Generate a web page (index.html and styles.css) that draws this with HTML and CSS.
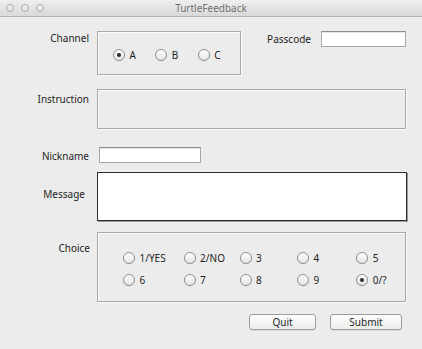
FILE: index.html
```html
<!DOCTYPE html>
<html>
<head>
<meta charset="utf-8">
<title>TurtleFeedback</title>
<link rel="stylesheet" href="styles.css">
</head>
<body>
<div class="window">
  <div class="titlebar">
    <div class="lights"><span class="light"></span><span class="light"></span><span class="light"></span></div>
    <div class="title">TurtleFeedback</div>
    <div></div>
  </div>
  <main class="content">
    <div class="row row-channel">
      <div class="label label-channel">Channel</div>
      <div class="group channel">
        <label class="opt"><span class="rb on"></span>A</label>
        <label class="opt"><span class="rb"></span>B</label>
        <label class="opt"><span class="rb"></span>C</label>
      </div>
      <div class="passcode">
        <span class="plabel">Passcode</span>
        <span class="field pass"></span>
      </div>
    </div>
    <div class="row row-instruction">
      <div class="label label-instruction">Instruction</div>
      <div class="group instruction"></div>
    </div>
    <div class="row row-nick">
      <div class="label label-nick">Nickname</div>
      <span class="field nick"></span>
    </div>
    <div class="row row-message">
      <div class="label label-message">Message</div>
      <div class="message"></div>
    </div>
    <div class="row row-choice">
      <div class="label label-choice">Choice</div>
      <div class="group choice">
        <label class="opt"><span class="rb"></span>1/YES</label>
        <label class="opt"><span class="rb"></span>2/NO</label>
        <label class="opt"><span class="rb"></span>3</label>
        <label class="opt"><span class="rb"></span>4</label>
        <label class="opt"><span class="rb"></span>5</label>
        <label class="opt"><span class="rb"></span>6</label>
        <label class="opt"><span class="rb"></span>7</label>
        <label class="opt"><span class="rb"></span>8</label>
        <label class="opt"><span class="rb"></span>9</label>
        <label class="opt"><span class="rb on"></span>0/?</label>
      </div>
    </div>
    <div class="row buttons">
      <button class="btn quit">Quit</button>
      <button class="btn submit">Submit</button>
    </div>
  </main>
</div>
</body>
</html>
```

FILE: styles.css
```css
* { box-sizing: border-box; }
html, body { margin: 0; padding: 0; }
body {
  width: 422px;
  height: 349px;
  overflow: hidden;
  background: #ececec;
  font-family: "Noto Sans", "DejaVu Sans", sans-serif;
  font-size: 10px;
  color: #1e1e1e;
}
.titlebar {
  height: 17px;
  display: grid;
  grid-template-columns: 1fr auto 1fr;
  align-items: center;
  background: linear-gradient(#efefef, #d9d9d9);
  border-bottom: 1px solid #b1b1b1;
}
.lights { display: flex; gap: 7px; padding-left: 6px; }
.light {
  width: 8px; height: 8px; border-radius: 50%;
  border: 1px solid #a8a8a8;
  background: linear-gradient(#f2f2f2, #e0e0e0);
}
.title { color: #707070; font-size: 10px; line-height: 12px; }

.content { padding-top: 14px; }
.row { display: flex; align-items: flex-start; }
.label {
  width: 89px; flex: none; margin-right: 8px;
  text-align: right; line-height: 12px;
}
.label-channel { padding-top: 1px; }
.label-instruction { padding-top: 4px; }
.label-nick { padding-top: 3px; }
.label-message { padding-top: 16px; padding-right: 4px; }
.label-choice { padding-top: 10px; width: 90px; margin-right: 7px; }

.group {
  border: 1px solid #a9a9a9;
  box-shadow: 1px 1px 0 #fbfbfb, inset 1px 1px 0 #fbfbfb;
}
.channel {
  width: 144px; height: 44px;
  display: flex;
  padding: 17px 0 0 15px;
}
.channel .opt { width: 44.5px; }
.opt { display: flex; align-items: center; gap: 4.5px; line-height: 12px; height: 12px; }
.rb {
  width: 12px; height: 12px; border-radius: 50%; flex: none;
  border: 1px solid #8f8f8f;
  background: linear-gradient(#ffffff, #e4e4e4);
  box-shadow: 0 0.5px 0.5px rgba(0,0,0,0.12);
  display: flex; align-items: center; justify-content: center;
}
.rb.on::after {
  content: ""; width: 4px; height: 4px; border-radius: 50%; background: #2a2a2a;
}

.passcode {
  margin-left: auto; margin-right: 16px;
  display: flex; align-items: center;
}
.plabel { margin-right: 10px; line-height: 12px; }
.field {
  display: block; height: 16px; background: #fff;
  border: 1px solid #a6a6a6; border-top-color: #8e8e8e;
  box-shadow: inset 0 1px 0 #e6e6e6;
}
.pass { width: 85px; }
.nick { width: 102px; margin-left: 2px; }

.row-instruction { margin-top: 14px; }
.instruction { width: 309px; height: 40px; }
.row-nick { margin-top: 18px; }
.row-message { margin-top: 9px; }
.message {
  width: 310px; height: 49px; background: #fff;
  border: 1px solid #2b2b2b;
  box-shadow: 1px 1px 0 #9a9a9a;
}
.row-choice { margin-top: 11px; }
.choice {
  width: 309px; height: 70px;
  display: grid;
  grid-template-columns: 60.6px 56px 57.4px 59.3px auto;
  row-gap: 9.6px;
  align-content: start;
  padding: 19px 0 0 25px;
}

.buttons { margin-top: 12px; justify-content: flex-end; padding-right: 20px; gap: 14px; }
.btn {
  height: 16px; padding: 0; margin: 0;
  font-family: inherit; font-size: 10px; line-height: 14px; color: #1e1e1e;
  border: 1px solid #9c9c9c; border-radius: 3px;
  background: linear-gradient(#ffffff, #ececec);
  box-shadow: 0 1px 0 rgba(0,0,0,0.08);
}
.quit { width: 67px; }
.submit { width: 72px; }
```
